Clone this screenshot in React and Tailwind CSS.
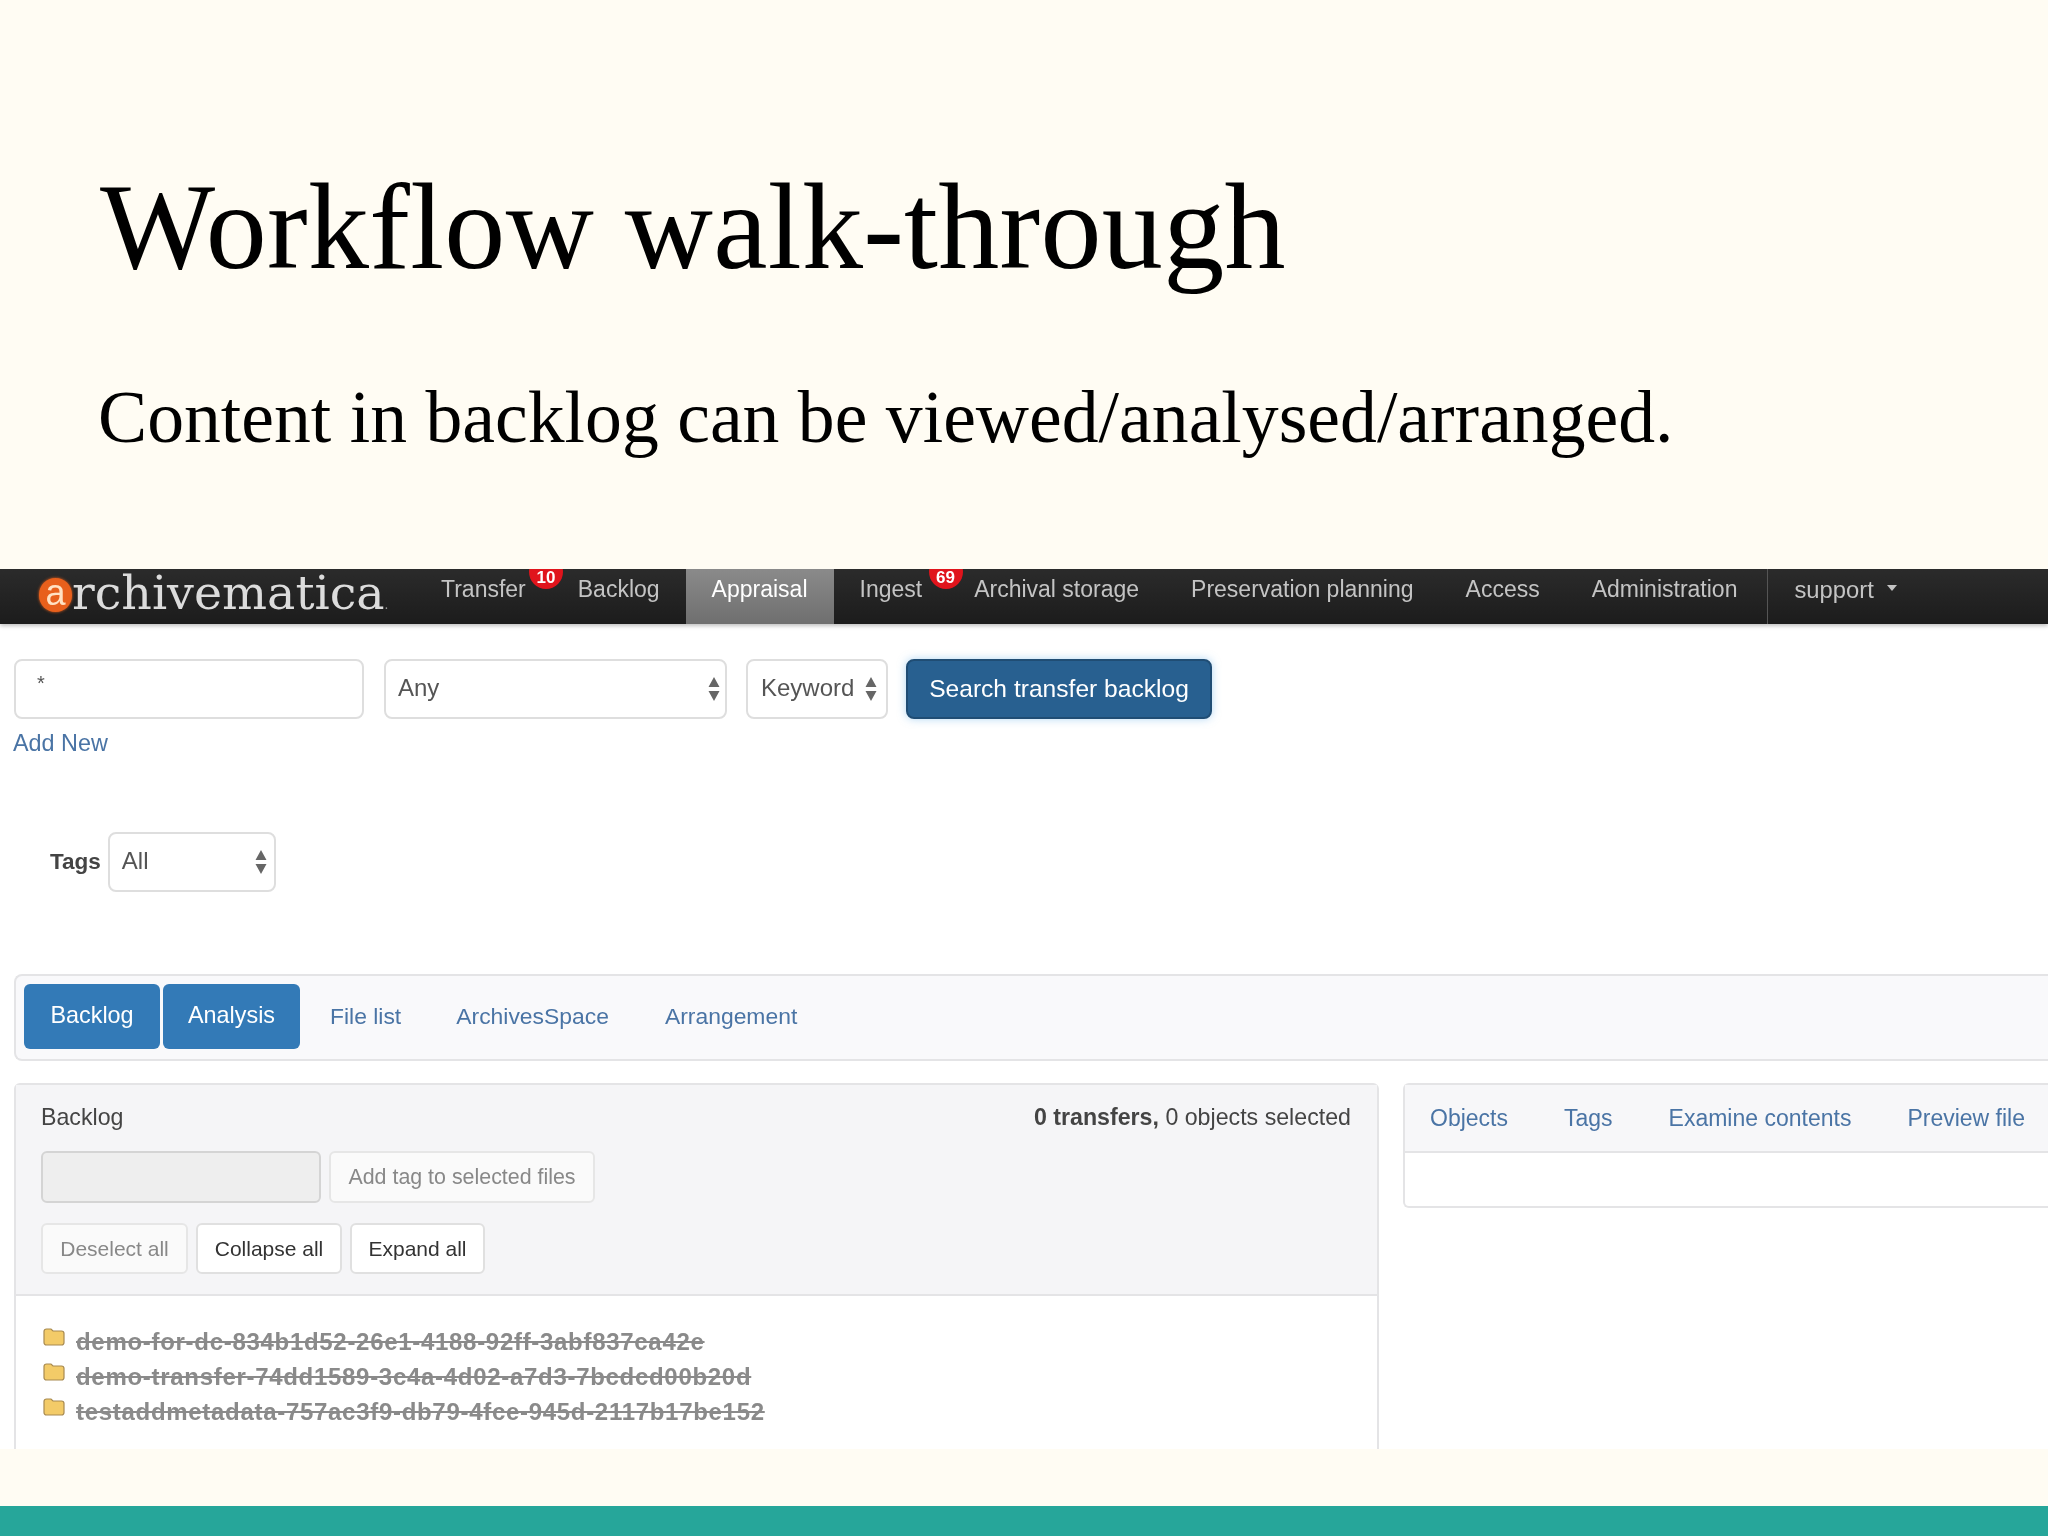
import React from "react";

const navItems = [
  { label: "Transfer", badge: "10", badgeClass: "left-[114px]" },
  { label: "Backlog" },
  { label: "Appraisal", active: true },
  { label: "Ingest", badge: "69", badgeClass: "left-[95px]" },
  { label: "Archival storage" },
  { label: "Preservation planning" },
  { label: "Access" },
  { label: "Administration" },
];

const rows = [
  "demo-for-dc-834b1d52-26e1-4188-92ff-3abf837ca42e",
  "demo-transfer-74dd1589-3c4a-4d02-a7d3-7bcdcd00b20d",
  "testaddmetadata-757ac3f9-db79-4fce-945d-2117b17be152",
];

function Arrows() {
  return (
    <svg width="12" height="24" viewBox="0 0 12 24" className="shrink-0">
      <path d="M6 0 L11.5 10 L0.5 10 Z M6 24 L11.5 14 L0.5 14 Z" fill="#666" />
    </svg>
  );
}

function Folder() {
  return (
    <svg width="22" height="18" viewBox="0 0 22 18" className="shrink-0 -mt-[10px]">
      <path d="M1 3.5 C1 2 2 1 3.5 1 H8 L10 3 H18.5 C20 3 21 4 21 5.5 V14.5 C21 16 20 17 18.5 17 H3.5 C2 17 1 16 1 14.5 Z" fill="#f3cb68" stroke="#a88a50" strokeWidth="1.2" />
    </svg>
  );
}

function Select({ label, className }) {
  return (
    <div className={`h-[60px] flex items-center justify-between bg-white border-2 border-[#dedede] rounded-lg ${className}`}>
      <span className="text-[24px] text-[#555] -mt-[2px]">{label}</span>
      <Arrows />
    </div>
  );
}

export default function App() {
  return (
    <div className="w-[2048px] h-[1536px] overflow-hidden flex flex-col bg-[#fffcf3] font-['Liberation_Sans',Arial,sans-serif]">
      <div className="h-[569px] shrink-0 pl-[98px] pt-[157px] font-['Liberation_Serif',serif] text-black">
        <h1 className="pl-[2px] text-[122px] leading-[140px] tracking-[0.3px] font-normal">Workflow walk-through</h1>
        <p className="mt-[77px] text-[73.7px] leading-[86px]">Content in backlog can be viewed/analysed/arranged.</p>
      </div>

      <div className="h-[880px] shrink-0 bg-white overflow-hidden blur-[0.4px]">
        <nav className="h-[55px] flex items-start bg-gradient-to-b from-[#2b2b2b] to-[#1c1c1c] shadow-[0_2px_4px_rgba(0,0,0,0.25)] text-[23px] text-[#c4c4c4]">
          <div className="w-[415px] shrink-0 pl-[39px] flex items-center h-[48px]">
            <span className="w-[33px] h-[34px] mt-[4px] rounded-full bg-[#e8601c] text-[#ffe2c4] shadow-[0_0_3px_#e8601c] flex items-center justify-center text-[36px] leading-none pb-[4px]">a</span>
            <span className="text-[47.5px] leading-none font-['DejaVu_Serif',serif] text-[#dcdcdc]">rchivematica<span className="text-[12px] text-[#999]">.</span></span>
          </div>
          {navItems.map((item) => (
            <div
              key={item.label}
              className={`relative h-[55px] px-[26px] pt-[3px] whitespace-nowrap ${item.active ? "bg-gradient-to-b from-[#8a8a8a] to-[#6f6f6f] text-white" : ""}`}
            >
              {item.label}
              {item.badge && (
                <span className={`absolute -top-[14px] ${item.badgeClass} w-[34px] h-[34px] rounded-full bg-[#e0141c] text-white text-[17px] leading-none font-bold flex items-end justify-center pb-[3px]`}>
                  {item.badge}
                </span>
              )}
            </div>
          ))}
          <div className="h-[55px] ml-[4px] pl-[26px] pt-[3px] border-l border-[#555] flex items-start gap-[13px] text-[23.8px]">
            support
            <span className="mt-[13px] w-0 h-0 border-x-[5px] border-x-transparent border-t-[6px] border-t-[#c4c4c4]" />
          </div>
        </nav>

        <div className="pl-[14px] pt-[35px] flex items-stretch">
          <div className="w-[350px] h-[60px] bg-white border-2 border-[#dedede] rounded-lg pl-[21px] pt-[7px] text-[20px] text-[#555]">*</div>
          <Select label="Any" className="w-[343px] ml-[20px] pl-[12px] pr-[5px]" />
          <Select label="Keyword" className="w-[142px] ml-[19px] pl-[13px] pr-[9px]" />
          <div className="w-[306px] h-[60px] ml-[18px] bg-[#286090] border-2 border-[#204d74] rounded-lg flex items-center justify-center text-[24.6px] text-white shadow-[0_0_8px_rgba(102,175,233,0.5)]">
            Search transfer backlog
          </div>
        </div>
        <div className="pl-[13px] mt-[9px] text-[23.4px] leading-[30px] text-[#4a74a5]">Add New</div>

        <div className="pl-[50px] mt-[74px] flex items-center gap-[7px]">
          <span className="text-[22.5px] font-bold text-[#444]">Tags</span>
          <Select label="All" className="w-[168px] pl-[12px] pr-[7px]" />
        </div>

        <div className="ml-[14px] mt-[82px] h-[87px] pl-[8px] pb-[3px] flex items-center bg-[#f9f9fb] border-2 border-r-0 border-[#e4e4e6] rounded-l-lg text-[22.9px] text-[#4a74a5]">
          <div className="h-[65px] w-[136px] bg-[#337ab7] text-white text-[23.4px] rounded-md flex items-center justify-center">Backlog</div>
          <div className="h-[65px] w-[137px] ml-[3px] bg-[#337ab7] text-white text-[23.4px] rounded-md flex items-center justify-center">Analysis</div>
          <span className="ml-[30px]">File list</span>
          <span className="ml-[55px]">ArchivesSpace</span>
          <span className="ml-[56px]">Arrangement</span>
        </div>

        <div className="mt-[22px] pl-[14px] flex items-start">
          <div className="w-[1365px] h-[400px] shrink-0 border-2 border-[#e4e4e6] rounded-t-md">
            <div className="h-[211px] bg-[#f5f5f7] border-b-2 border-[#e4e4e6] px-[25px] pt-[15px]">
              <div className="flex justify-between text-[23.2px] text-[#444] pr-[1px]">
                <span>Backlog</span>
                <span><b>0 transfers,</b> 0 objects selected</span>
              </div>
              <div className="mt-[16.5px] flex gap-[8px]">
                <div className="w-[280px] h-[52px] bg-[#eeeeee] border-2 border-[#d4d4d4] rounded-md" />
                <div className="w-[266px] h-[52px] bg-[#fafafa] border-2 border-[#e6e6e6] rounded-md flex items-center justify-center text-[21.4px] text-[#888]">Add tag to selected files</div>
              </div>
              <div className="mt-[20px] flex gap-[8px] text-[21px] text-[#333]">
                <div className="w-[147px] h-[51px] bg-[#fafafa] border-2 border-[#e6e6e6] rounded-md flex items-center justify-center text-[#888]">Deselect all</div>
                <div className="w-[146px] h-[51px] bg-white border-2 border-[#e0e0e0] rounded-md flex items-center justify-center">Collapse all</div>
                <div className="w-[135px] h-[51px] bg-white border-2 border-[#e0e0e0] rounded-md flex items-center justify-center">Expand all</div>
              </div>
            </div>
            <div className="pl-[27px] pt-[28px] flex flex-col">
              {rows.map((row) => (
                <div key={row} className="h-[35px] flex items-center gap-[11px] text-[24px] font-bold tracking-[0.7px] text-[#8a8a8a] line-through">
                  <Folder />
                  <span>{row}</span>
                </div>
              ))}
            </div>
          </div>

          <div className="ml-[24px] grow h-[125px] border-2 border-r-0 border-[#e4e4e6] rounded-l-md">
            <div className="h-[68px] bg-[#f7f7f9] border-b-2 border-[#e4e4e6] pl-[25px] flex items-center gap-[56px] text-[23px] text-[#4a74a5] whitespace-nowrap">
              <span>Objects</span>
              <span>Tags</span>
              <span>Examine contents</span>
              <span>Preview file</span>
            </div>
          </div>
        </div>
      </div>

      <div className="h-[57px] shrink-0" />
      <div className="h-[30px] shrink-0 bg-[#26a69a]" />
    </div>
  );
}
